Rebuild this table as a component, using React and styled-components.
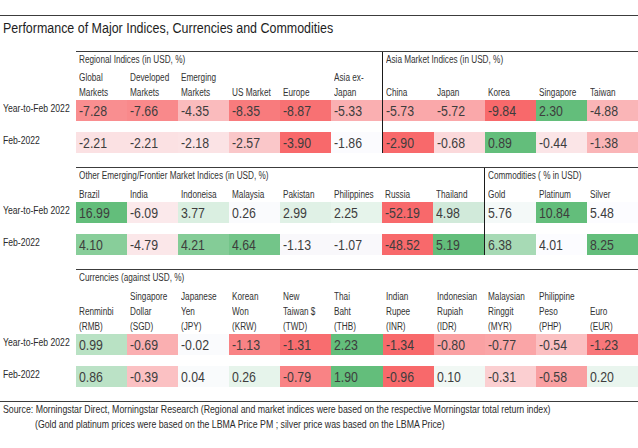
import styled, { createGlobalStyle } from 'styled-components';

const GlobalStyle = createGlobalStyle`
  html, body {
    margin: 0;
    padding: 0;
    background: #ffffff;
  }
  body {
    font-family: "Liberation Sans", Arial, sans-serif;
    color: #333333;
  }
`;

// Arial Narrow look: Liberation Sans squeezed horizontally
const Txt = styled.span`
  display: inline-block;
  transform: scaleX(0.82);
  transform-origin: 0 50%;
  white-space: pre;
`;

const Page = styled.div`
  width: 638px;
  height: 448px;
  padding-top: 15px;
  box-sizing: border-box;
  overflow: hidden;
`;

const Title = styled.h1`
  margin: 0;
  height: 36px;
  border-top: 1px solid #3c3c3c;
  padding: 1px 0 0 3px;
  box-sizing: border-box;
  font-size: 15.2px;
  line-height: 22px;
  font-weight: normal;
  color: #1e1e1e;
  white-space: nowrap;
`;

const Section = styled.section`
  display: grid;
  grid-template-columns: 76px 1fr;
  margin-bottom: 14px;
`;

const RowLabels = styled.div`
  display: flex;
  flex-direction: column;
  gap: 11px;
  padding-top: ${p => 17 + p.$labelHeight}px;
`;

const RowLabel = styled.div`
  height: 21px;
  padding-left: 3px;
  font-size: 10.5px;
  line-height: 16px;
  color: #2b2b2b;
  white-space: nowrap;
`;

const Groups = styled.div`
  display: flex;
  border-top: 1px solid #3c3c3c;
`;

const Group = styled.div`
  flex: ${p => p.$cols} ${p => p.$cols} 0;
  min-width: 0;
  display: flex;
  flex-direction: column;
  border-left: ${p => (p.$divider ? '1px solid #1a1a1a' : 'none')};
`;

const GroupTitle = styled.div`
  height: 16px;
  padding-left: 3px;
  font-size: 10px;
  line-height: 16px;
  color: #333333;
  white-space: nowrap;
`;

const Cols = styled.div`
  display: grid;
  grid-template-columns: repeat(${p => p.$cols}, 1fr);
`;

const ColLabel = styled.div`
  height: ${p => p.$height}px;
  display: flex;
  flex-direction: column;
  justify-content: flex-end;
  align-items: flex-start;
  padding-left: 3px;
  font-size: 10px;
  line-height: 15px;
  color: #333333;
  overflow: hidden;
`;

const DataRow = styled(Cols)`
  & + & {
    margin-top: 11px;
  }
`;

const Cell = styled.div`
  height: 21px;
  padding-left: 3px;
  background: ${p => p.$bg};
  font-size: 15px;
  line-height: 21px;
  color: #3d3d3d;
  white-space: nowrap;
  overflow: hidden;
`;

const Footer = styled.footer`
  border-top: 1px solid #3c3c3c;
  font-size: 10.7px;
  line-height: 15px;
  color: #2b2b2b;
  padding-left: 3px;
  white-space: nowrap;
`;

const FooterLine = styled.div`
  padding-left: ${p => (p.$indent ? 32 : 0)}px;
`;

const sections = [
  {
    labelHeight: 32,
    groups: [
      {
        title: 'Regional Indices (in USD, %)',
        cols: ['Global\nMarkets', 'Developed\nMarkets', 'Emerging\nMarkets', 'US Market', 'Europe', 'Asia ex-\nJapan'],
        rows: [
          [['-7.28', '#f98e90'], ['-7.66', '#f9898b'], ['-4.35', '#fabbbd'], ['-8.35', '#f87b7d'], ['-8.87', '#f87173'], ['-5.33', '#faafb1']],
          [['-2.21', '#fbe1e3'], ['-2.21', '#fbe1e3'], ['-2.18', '#fbe3e5'], ['-2.57', '#fac7c9'], ['-3.90', '#f8696b'], ['-1.86', '#fbfbfe']],
        ],
      },
      {
        title: 'Asia Market Indices (in USD, %)',
        cols: ['China', 'Japan', 'Korea', 'Singapore', 'Taiwan'],
        rows: [
          [['-5.73', '#faa8aa'], ['-5.72', '#faa8aa'], ['-9.84', '#f8696b'], ['2.30', '#63be7b'], ['-4.88', '#fab5b7']],
          [['-2.90', '#f8696b'], ['-0.68', '#fbd9db'], ['0.89', '#63be7b'], ['-0.44', '#fbe5e7'], ['-1.38', '#fab5b7']],
        ],
      },
    ],
  },
  {
    labelHeight: 18,
    groups: [
      {
        title: 'Other Emerging/Frontier Market Indices (in USD, %)',
        cols: ['Brazil', 'India', 'Indoneisa', 'Malaysia', 'Pakistan', 'Philippines', 'Russia', 'Thailand'],
        rows: [
          [['16.99', '#63be7b'], ['-6.09', '#fbe9eb'], ['3.77', '#daefe1'], ['0.26', '#fafbfd'], ['2.99', '#e0f1e6'], ['2.25', '#e6f4eb'], ['-52.19', '#f8696b'], ['4.98', '#d1eada']],
          [['4.10', '#88ce9a'], ['-4.79', '#fbe7e9'], ['4.21', '#84cc97'], ['4.64', '#73c589'], ['-1.13', '#f9f8fb'], ['-1.07', '#f9f8fb'], ['-48.52', '#f8696b'], ['5.19', '#63be7b']],
        ],
      },
      {
        title: 'Commodities ( % in USD)',
        cols: ['Gold', 'Platinum', 'Silver'],
        rows: [
          [['5.76', '#f4f9f8'], ['10.84', '#63be7b'], ['5.48', '#fcfcff']],
          [['6.38', '#a7dab5'], ['4.01', '#fcfcff'], ['8.25', '#63be7b']],
        ],
      },
    ],
  },
  {
    labelHeight: 48,
    groups: [
      {
        title: 'Currencies (against USD, %)',
        cols: [
          'Renminbi\n(RMB)', 'Singapore\nDollar\n(SGD)', 'Japanese\nYen\n(JPY)', 'Korean\nWon\n(KRW)',
          'New\nTaiwan $\n(TWD)', 'Thai\nBaht\n(THB)', 'Indian\nRupee\n(INR)', 'Indonesian\nRupiah\n(IDR)',
          'Malaysian\nRinggit\n(MYR)', 'Philippine\nPeso\n(PHP)', 'Euro\n(EUR)',
        ],
        rows: [
          [['0.99', '#b9e2c4'], ['-0.69', '#faafb1'], ['-0.02', '#fafbfd'], ['-1.13', '#f98385'], ['-1.31', '#f86d6f'], ['2.23', '#63be7b'], ['-1.34', '#f8696b'], ['-0.80', '#faa1a3'], ['-0.77', '#faa5a7'], ['-0.54', '#fbc0c2'], ['-1.23', '#f8777a']],
          [['0.86', '#bbe2c6'], ['-0.39', '#fbc1c3'], ['0.04', '#f9fbfc'], ['0.26', '#e6f4eb'], ['-0.79', '#f98385'], ['1.90', '#63be7b'], ['-0.96', '#f8696b'], ['0.10', '#f1f8f4'], ['-0.31', '#fbcfd1'], ['-0.58', '#f99fa1'], ['0.20', '#e9f5ee']],
        ],
      },
    ],
  },
];

const rowNames = ['Year-to-Feb 2022', 'Feb-2022'];

function TableSection({ section }) {
  return (
    <Section>
      <RowLabels $labelHeight={section.labelHeight}>
        {rowNames.map(name => <RowLabel key={name}><Txt>{name}</Txt></RowLabel>)}
      </RowLabels>
      <Groups>
        {section.groups.map((g, gi) => (
          <Group key={g.title} $cols={g.cols.length} $divider={gi > 0}>
            <GroupTitle><Txt>{g.title}</Txt></GroupTitle>
            <Cols $cols={g.cols.length}>
              {g.cols.map(c => (
                <ColLabel key={c} $height={section.labelHeight}><Txt>{c}</Txt></ColLabel>
              ))}
            </Cols>
            {g.rows.map((row, ri) => (
              <DataRow key={ri} $cols={g.cols.length}>
                {row.map(([v, bg], ci) => <Cell key={ci} $bg={bg}><Txt>{v}</Txt></Cell>)}
              </DataRow>
            ))}
          </Group>
        ))}
      </Groups>
    </Section>
  );
}

export default function App() {
  return (
    <>
      <GlobalStyle />
      <Page>
        <Title><Txt>Performance of Major Indices, Currencies and Commodities</Txt></Title>
        {sections.map((s, i) => <TableSection key={i} section={s} />)}
        <Footer>
          <FooterLine><Txt>Source: Morningstar Direct, Morningstar Research (Regional and market indices were based on the respective Morningstar total return index)</Txt></FooterLine>
          <FooterLine $indent><Txt>(Gold and platinum prices were based on the LBMA Price PM ; silver price was based on the LBMA Price)</Txt></FooterLine>
        </Footer>
      </Page>
    </>
  );
}
